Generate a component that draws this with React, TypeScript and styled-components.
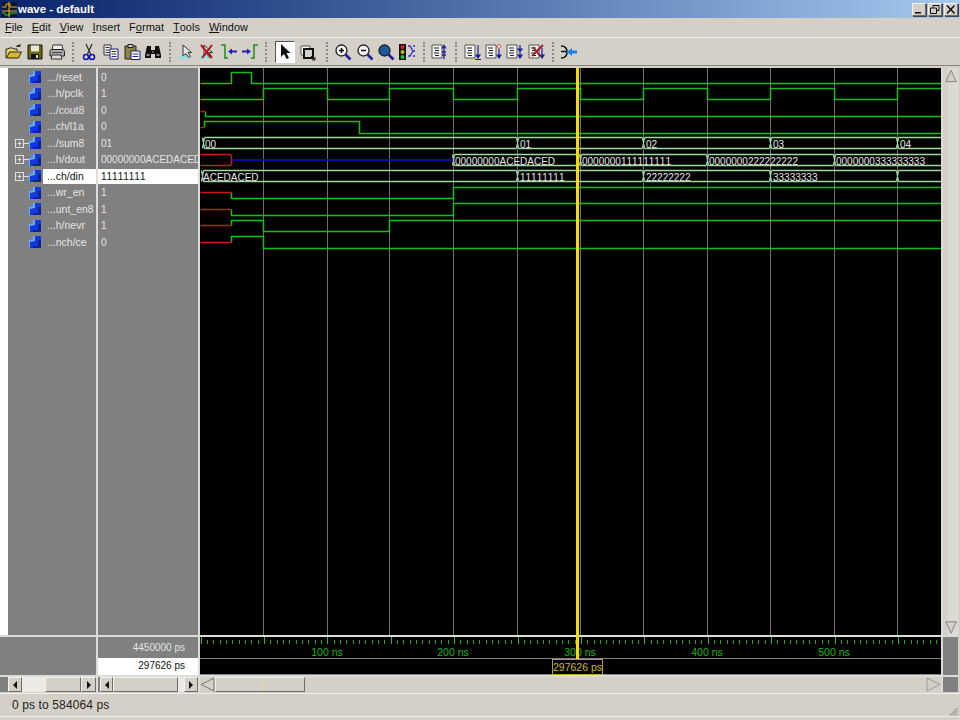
import React from "react";
import styled, { createGlobalStyle, css } from "styled-components";

const GlobalStyle = createGlobalStyle`
  html, body { margin: 0; padding: 0; background: #d4d0c8; overflow: hidden; }
  * { box-sizing: border-box; }
`;

const bevel = css`
  background: #d4d0c8;
  border-style: solid;
  border-width: 1px;
  border-color: #f4f2ee #6e6c68 #6e6c68 #f4f2ee;
  box-shadow: 1px 1px 0 #404040;
`;

const Page = styled.div`
  width: 960px;
  height: 720px;
  display: flex;
  flex-direction: column;
  background: #d4d0c8;
  font-family: "Liberation Sans", Arial, sans-serif;
  font-kerning: none;
  overflow: hidden;
`;

const TitleBar = styled.header`
  height: 18px;
  flex: none;
  display: flex;
  align-items: center;
  padding: 0 2px;
  background: linear-gradient(90deg, #0a246a 0%, #2f4f8f 30%, #a6caf0 100%);
`;
const TitleText = styled.span`
  margin-left: 1px;
  color: #fff;
  font-size: 11.5px;
  font-weight: 700;
`;
const WindowButtons = styled.div`
  margin-left: auto;
  display: flex;
  gap: 2px;
`;
const WindowButton = styled.div`
  ${bevel}
  width: 14px;
  height: 13px;
  display: flex;
  align-items: center;
  justify-content: center;
`;

const MenuBar = styled.nav`
  height: 19px;
  flex: none;
  display: flex;
  gap: 9px;
  align-items: center;
  padding: 0 0 2px 5px;
  font-size: 11px;
  color: #111;
`;
const MenuItem = styled.span`
  u { text-underline-offset: 1px; }
`;

const Toolbar = styled.div`
  height: 29px;
  flex: none;
  display: flex;
  align-items: center;
  padding-left: 3.35px;
  border-top: 1px solid #f2f0ec;
  border-bottom: 1px solid #858380;
`;
const ToolButton = styled.div<{ $w?: number; $pressed?: boolean }>`
  width: ${(p) => p.$w ?? 21.3}px;
  height: 22px;
  flex: none;
  display: flex;
  align-items: center;
  justify-content: center;
  ${(p) =>
    p.$pressed &&
    css`
      background: #fff;
      border-top: 1px solid #555;
      border-left: 1px solid #555;
      border-right: 1px solid #fff;
      border-bottom: 1px solid #fff;
      margin-left: 3px;
    `}
`;
const ToolSeparator = styled.div`
  width: 11.5px;
  height: 20px;
  flex: none;
  display: flex;
  justify-content: center;
  &::after {
    content: "";
    width: 0;
    height: 100%;
    border-left: 2px dotted #8a8a84;
  }
`;

const Workspace = styled.main`
  margin-top: 2px;
  display: grid;
  grid-template-columns: 96px 100px 741px 15px;
  grid-template-rows: 567px 38px 15px;
  gap: 2px;
  background: #dedcd8;
  width: 958px;
  height: 624px;
  box-shadow: 2px 0 0 #d4d0c8;
`;

const NamesPane = styled.section`
  background: #808080;
  border-left: 8px solid #fff;
  padding-top: 1px;
  display: grid;
  grid-auto-rows: 16.5px;
  align-content: start;
`;
const NameRow = styled.div`
  display: flex;
  align-items: center;
  padding-left: 7px;
`;
const ExpanderSlot = styled.div`
  width: 14px;
  height: 11px;
  flex: none;
  display: flex;
  align-items: center;
`;
const NameLabel = styled.span<{ $selected?: boolean }>`
  flex: 1;
  height: 15px;
  line-height: 15px;
  margin-left: 2px;
  padding-left: 4px;
  font-size: 10.5px;
  white-space: nowrap;
  overflow: hidden;
  color: ${(p) => (p.$selected ? "#111" : "#e4e4e4")};
  background: ${(p) => (p.$selected ? "#fff" : "transparent")};
`;

const ValuesPane = styled.section`
  background: #808080;
  padding-top: 1px;
  display: grid;
  grid-auto-rows: 16.5px;
  align-content: start;
`;
const ValueRow = styled.div<{ $selected?: boolean }>`
  height: 15px;
  align-self: center;
  line-height: 15px;
  padding-left: 3px;
  font-size: 10px;
  white-space: nowrap;
  overflow: hidden;
  color: ${(p) => (p.$selected ? "#111" : "#e4e4e4")};
  background: ${(p) => (p.$selected ? "#fff" : "transparent")};
`;

const WaveCanvas = styled.svg`
  grid-column: 3;
  grid-row: 1 / 3;
  display: block;
  background: #000;
  font-family: "Liberation Sans", Arial, sans-serif;
  font-kerning: none;
`;

const VScroll = styled.div`
  grid-column: 4;
  grid-row: 1;
  display: flex;
  flex-direction: column;
  justify-content: space-between;
  padding-left: 2px;
  background: linear-gradient(90deg, #d4d0c8 0, #d4d0c8 5px, #dcdad5 5px);
`;

const GreyBlock = styled.div`
  background: #808080;
`;
const CursorNames = styled(GreyBlock)`
  grid-column: 1;
  grid-row: 2;
`;
const CursorValues = styled.div`
  grid-column: 2;
  grid-row: 2;
  display: grid;
  grid-template-rows: 21px 17px;
  font-size: 10px;
  text-align: right;
`;
const CursorTotal = styled.div`
  background: #808080;
  color: #e4e4e4;
  line-height: 21px;
  padding-right: 13px;
`;
const CursorNow = styled.div`
  background: #fff;
  color: #111;
  line-height: 16px;
  padding-right: 13px;
`;
const ScrollCorner = styled(GreyBlock)`
  grid-column: 4;
`;

const HScroll = styled.div<{ $inset?: number }>`
  display: flex;
  height: 15px;
  background: #808080;
  padding-left: ${(p) => p.$inset ?? 0}px;
`;
const ScrollButton = styled.div<{ $w?: number }>`
  ${bevel}
  width: ${(p) => p.$w ?? 14}px;
  flex: none;
  display: flex;
  align-items: center;
  justify-content: center;
  box-shadow: none;
`;
const ScrollTrack = styled.div<{ $w: number }>`
  width: ${(p) => p.$w}px;
  flex: none;
  background: #eceae6;
`;
const ScrollThumb = styled.div`
  ${bevel}
  flex: 1;
  box-shadow: none;
`;
const WaveScroll = styled.div`
  display: flex;
  height: 15px;
  background: #d4d0c8;
`;
const OutlineArrow = styled.svg`
  width: 15px;
  height: 15px;
  flex: none;
`;
const WaveThumb = styled.div`
  ${bevel}
  position: relative;
  width: 90px;
  flex: none;
  margin-right: auto;
  box-shadow: none;
  &::after {
    content: "";
    position: absolute;
    left: 47px;
    top: 1px;
    bottom: 1px;
    width: 1px;
    background: #e0dc80;
  }
`;

const StatusBar = styled.footer`
  margin-top: 1px;
  height: 24px;
  flex: none;
  display: flex;
  align-items: center;
  justify-content: space-between;
  padding: 0 2px 0 12px;
  border-top: 1px solid #f0eeea;
  border-bottom: 1px solid #f0eeea;
  font-size: 12px;
  letter-spacing: 0.12px;
  color: #222;
`;

/* ---------- icons ---------- */
const Tri = ({ d }: { d: "l" | "r" }) => (
  <svg width="6" height="8" viewBox="0 0 6 8">
    <path d={d === "l" ? "M5 0v8L1 4z" : "M1 0v8l4-4z"} fill="#111" />
  </svg>
);

const Ic = ({ children, size = 18 }: { children: React.ReactNode; size?: number }) => (
  <svg width={size} height={size} viewBox="0 0 18 18">
    {children}
  </svg>
);

const OpenIcon = () => (
  <Ic>
    <path d="M1 15V6h2l1-1h4l1 1h3v2" fill="#e8d468" stroke="#222" />
    <path d="M1.5 15 4.5 9h12l-3 6z" fill="#d8b830" stroke="#222" />
    <path d="M11 4c1-2 3-2 4-1M15 1v2.5h-2.5" fill="none" stroke="#222" />
  </Ic>
);
const SaveIcon = () => (
  <Ic>
    <path d="M2 2h14v14H2z" fill="#6e6a10" stroke="#111" />
    <path d="M5 2.5h8v6H5z" fill="#e8e8d8" />
    <path d="M5 11h8v5H5z" fill="#111" />
    <path d="M10 12h2v3h-2z" fill="#ddd" />
  </Ic>
);
const PrintIcon = () => (
  <Ic>
    <path d="M5 2h9l1 5H4z" fill="#eee" stroke="#333" />
    <path d="M2 8c0-1 1-1.500 2-1.500h10c1.500 0 2.500 1 2.500 2V13H2z" fill="#aaa" stroke="#222" />
    <path d="M4 12h9l1 4H3z" fill="#ddd" stroke="#333" />
    <path d="M4 9.500h10" stroke="#444" />
  </Ic>
);
const CutIcon = () => (
  <Ic>
    <path d="M6 1l4.500 10M12 1 7.500 11" stroke="#333" strokeWidth="1.300" fill="none" />
    <circle cx="6" cy="14" r="2.500" fill="none" stroke="#1010c0" strokeWidth="1.500" />
    <circle cx="12" cy="14" r="2.500" fill="none" stroke="#1010c0" strokeWidth="1.500" />
  </Ic>
);
const CopyIcon = () => (
  <Ic>
    <path d="M2 2h7v10H2z" fill="#eee" stroke="#333" />
    <path d="M3.500 4.500h4M3.500 7h4M3.500 9.500h4" stroke="#333" />
    <path d="M8 6h8v10H8z" fill="#fff" stroke="#1a1a70" />
    <path d="M9.500 8.500h5M9.500 11h5M9.500 13.500h5" stroke="#2020a0" />
  </Ic>
);
const PasteIcon = () => (
  <Ic>
    <path d="M2 3h11v13H2z" fill="#8a8640" stroke="#222" />
    <path d="M5 1.500h5v3H5z" fill="#ccc" stroke="#222" />
    <path d="M8 8h9v8.500H8z" fill="#fff" stroke="#1a1a70" />
    <path d="M9.500 11h6M9.500 13.500h6" stroke="#2020a0" />
  </Ic>
);
const FindIcon = () => (
  <Ic>
    <path d="M3 3h4v4h4V3h4l2 9v3h-6v-4H7v4H1v-3z" fill="#111" />
    <path d="M2.500 11h3v2h-3zM12.500 11h3v2h-3z" fill="#888" />
    <path d="M8 8h2v2H8z" fill="#555" />
  </Ic>
);
const SelectIcon = () => (
  <>
    <path d="M1 15l4-3h8l-3 4H2z" fill="#90e0e0" />
    <path d="M6 2v11l3-2.500 2.500 4 2-1-2.500-4h3.500z" fill="#e8e8e8" stroke="#333" />
  </>
);
const AddCursorIcon = () => <Ic><SelectIcon /></Ic>;
const DelCursorIcon = () => (
  <Ic>
    <SelectIcon />
    <path d="M3 2l11 13M14 2 4 15" stroke="#b01818" strokeWidth="2" />
  </Ic>
);
const PrevEdgeIcon = () => (
  <Ic>
    <path d="M1 2h4v13h3M14 2" fill="none" stroke="#189018" strokeWidth="1.500" />
    <path d="M8 8.500l4-3v2h5v2h-5v2z" fill="#2020c0" />
  </Ic>
);
const NextEdgeIcon = () => (
  <Ic>
    <path d="M17 2h-4v13h-3" fill="none" stroke="#189018" strokeWidth="1.500" />
    <path d="M10 8.500l-4-3v2H1v2h5v2z" fill="#2020c0" />
  </Ic>
);
const PointerIcon = () => (
  <Ic>
    <path d="M5 1v13l3-3 2.500 5 2.500-1-2.500-5h4z" fill="#111" />
  </Ic>
);
const ZoomRangeIcon = () => (
  <Ic>
    <path d="M2 3h9v9H2z" fill="#fff" stroke="#555" />
    <path d="M5 6h9v9H5z" fill="#d4d0c8" stroke="#111" strokeWidth="2" />
    <path d="M12 13l4 4M16 14v3h-3" stroke="#111" fill="none" />
  </Ic>
);
const Mag = ({ sign }: { sign?: "+" | "-" | "fill" }) => (
  <Ic>
    <circle cx="7.500" cy="7.500" r="5.500" fill={sign === "fill" ? "#1a5a9a" : "#f4f4f4"} stroke="#222" strokeWidth="1.300" />
    <path d="M11.500 11.500l5 5" stroke="#2020a0" strokeWidth="2.600" />
    {sign !== "fill" && <path d="M5 7.500h5" stroke="#111" strokeWidth="1.500" />}
    {sign === "+" && <path d="M7.500 5v5" stroke="#111" strokeWidth="1.500" />}
  </Ic>
);
const TrafficIcon = () => (
  <Ic>
    <path d="M1 1h7v16H1z" fill="#111" />
    <circle cx="4.500" cy="4" r="2" fill="#e02020" />
    <circle cx="4.500" cy="9" r="2" fill="#c0b020" />
    <circle cx="4.500" cy="14" r="2" fill="#20c040" />
    <path d="M10 3h2l3 5h2M10 13h2l3-5M15 3h2M12 13h0M15 8l-3 5M15 13h2" stroke="#3030d0" strokeWidth="1.300" fill="none" />
  </Ic>
);
const DocLines = () => (
  <>
    <path d="M1 2h10v13H1z" fill="#f4f4f4" stroke="#555" />
    <path d="M3 5h5M4 7.500h4M3 10h5M4 12.500h4" stroke="#222" />
  </>
);
const ExpandAllIcon = () => (
  <Ic>
    <DocLines />
    <path d="M13 16V3M11 5.500l2-3 2 3M11 9h4M11 12h4" stroke="#2020a0" strokeWidth="1.300" fill="none" />
  </Ic>
);
const DownLineIcon = () => (
  <Ic>
    <DocLines />
    <path d="M14 2v12M12 12l2 3 2-3z" stroke="#2020a0" strokeWidth="1.200" fill="#2020a0" />
    <path d="M11 16.500h6" stroke="#2020a0" />
  </Ic>
);
const DownMarkIcon = () => (
  <Ic>
    <DocLines />
    <circle cx="14" cy="3.500" r="1.800" fill="#fff" stroke="#e04040" />
    <path d="M14 6v8M12 12l2 3 2-3z" stroke="#2020a0" strokeWidth="1.200" fill="#2020a0" />
  </Ic>
);
const DownDoubleIcon = () => (
  <Ic>
    <DocLines />
    <path d="M14 2v13M12 6l2 2.500L16 6zM12 12l2 3 2-3z" stroke="#2020a0" strokeWidth="1.200" fill="#2020a0" />
  </Ic>
);
const DownDelIcon = () => (
  <Ic>
    <DocLines />
    <path d="M14 5v9M12 12l2 3 2-3z" stroke="#2020a0" strokeWidth="1.200" fill="#2020a0" />
    <path d="M4 13 15 2M5 4l7 9" stroke="#a02030" strokeWidth="2" />
  </Ic>
);
const CombineIcon = () => (
  <Ic>
    <path d="M1 3c5 0 6 3 6 6s-1 6-6 6" fill="none" stroke="#111" strokeWidth="1.500" />
    <path d="M1 8.500h5" stroke="#111" strokeWidth="1.500" />
    <path d="M7 9l5-4v2.500h5v3h-5V13z" fill="#1880f0" />
  </Ic>
);
const AppIcon = () => (
  <svg width="15" height="15" viewBox="0 0 15 15">
    <rect width="15" height="15" fill="#14142c" />
    <path d="M0 5h4V2h4v3h7M0 9h15" stroke="#d0b040" fill="none" />
    <path d="M0 11h3v2h5v-2h7" stroke="#40c040" fill="none" />
    <path d="M7 0v15" stroke="#e8c020" />
  </svg>
);
const SignalIcon = () => (
  <svg width="12" height="12" viewBox="0 0 12 12" style={{ flex: "none" }}>
    <path d="M0 4 4 3V0h8v12H0z" fill="#1238e0" />
    <path d="M0 4 4 3V0h2v5L1 6v6H0z" fill="#6aa8ff" />
    <path d="M9 4h3v8H4v-2h5z" fill="#0c20a0" />
  </svg>
);
const Expander = () => (
  <svg width="14" height="11" viewBox="0 0 14 11">
    <rect x="0.500" y="1.500" width="8" height="8" fill="none" stroke="#e0e0e0" />
    <path d="M2.500 5.500h4M4.500 3.500v4" stroke="#e0e0e0" />
    <path d="M9 5.500h5" stroke="#e0e0e0" />
  </svg>
);
const Grip = () => (
  <svg width="9" height="9" viewBox="0 0 9 9" style={{ marginTop: 12 }}>
    <path d="M8.500 1 1 8.500M8.500 4 4 8.500M8.500 7 7 8.500" stroke="#777" />
  </svg>
);

/* ---------- data ---------- */
type Signal = { name: string; value: string; bus?: boolean; selected?: boolean };
const signals: Signal[] = [
  { name: ".../reset", value: "0" },
  { name: "...h/pclk", value: "1" },
  { name: ".../cout8", value: "0" },
  { name: "...ch/l1a", value: "0" },
  { name: ".../sum8", value: "01", bus: true },
  { name: "...h/dout", value: "00000000ACEDACED", bus: true },
  { name: "...ch/din", value: "11111111", bus: true, selected: true },
  { name: "...wr_en", value: "1" },
  { name: "...unt_en8", value: "1" },
  { name: "...h/nevr", value: "1" },
  { name: "...nch/ce", value: "0" },
];

const gridXs = [263, 327, 389, 453, 517, 580, 643, 707, 770, 834, 897];
const END = 941;
const GREEN = "#14c014";
const RED = "#c01c1c";
const BUS = "#a0d8a0";

const greenPaths = [
  `M200 83H231V72H251V83H${END}`,
  `M200 99H263V88H327V99H389V88H453V99H517V88H580V99H643V88H707V99H770V88H834V99H897V88H${END}`,
  `M205 111V116H${END}`,
  `M204 127V121H359V133H${END}`,
  `M231 192V198H453V187H${END}`,
  `M231 209V215H453V203H${END}`,
  `M231 225V220H263V231H389V220H${END}`,
  `M231 242V236H263V248H${END}`,
];
const redPaths = [
  "M200 111H205",
  "M200 127H204",
  "M200 154H230L231 156V163L230 165H200",
  "M200 192H231",
  "M200 209H231",
  "M200 225H231",
  "M200 242H231",
];

type Bus = { top: number; edges: number[]; texts: [number, string][] };
const buses: Bus[] = [
  {
    top: 137,
    edges: [203, 517, 643, 770, 897],
    texts: [[205, "00"], [520, "01"], [646, "02"], [773, "03"], [900, "04"]],
  },
  {
    top: 154,
    edges: [453, 580, 707, 834],
    texts: [
      [455, "00000000ACEDACED"],
      [582, "0000000111111111"],
      [709, "0000000222222222"],
      [836, "0000000333333333"],
    ],
  },
  {
    top: 170,
    edges: [202, 517, 643, 770, 897],
    texts: [[203, "ACEDACED"], [520, "11111111"], [646, "22222222"], [773, "33333333"]],
  },
];

const busPath = ({ top, edges }: Bus) => {
  const bot = top + 11;
  let d = "";
  edges.forEach((x, i) => {
    const next = edges[i + 1] ?? END + 2;
    d += `M${x - 1} ${top}L${x + 1} ${bot}M${x - 1} ${bot}L${x + 1} ${top}`;
    d += `M${x + 1} ${top}H${next - 1}M${x + 1} ${bot}H${next - 1}`;
  });
  return d;
};

const ticks = Array.from({ length: 118 }, (_, i) => ({
  x: Math.round(200.5 + i * 6.34),
  major: i % 10 === 0,
})).filter((t) => t.x < END);

const Wave = () => (
  <WaveCanvas width={741} height={607} viewBox="200 68 741 607">
    {gridXs.map((x) => (
      <line key={x} x1={x + 0.5} x2={x + 0.5} y1={68} y2={635} stroke="#707070" />
    ))}
    <g transform="translate(0.5 0.5)" fill="none">
      {greenPaths.map((d) => (
        <path key={d} d={d} stroke={GREEN} strokeWidth="1.500" />
      ))}
      {redPaths.map((d) => (
        <path key={d} d={d} stroke={RED} strokeWidth="1.500" />
      ))}
      {buses.map((b) => (
        <path key={b.top} d={busPath(b)} stroke={BUS} strokeWidth="1.300" />
      ))}
    </g>
    <line x1={232} x2={453} y1={160} y2={160} stroke="#0c0c90" strokeWidth="2" />
    {buses.map((b) =>
      b.texts.map(([x, t]) => (
        <text key={t} x={x} y={b.top + 10.5} fontSize="10" fill="#e6e6e6">
          {t}
        </text>
      ))
    )}
    <rect x={200} y={635} width={741} height={2} fill="#dedcd8" />
    {ticks.map((t) => (
      <line
        key={t.x}
        x1={t.x + 0.5}
        x2={t.x + 0.5}
        y1={t.major ? 637 : 640}
        y2={644}
        stroke={t.major ? "#1cc01c" : "#14a814"}
      />
    ))}
    {[[327, "100"], [453, "200"], [580, "300"], [707, "400"], [834, "500"]].map(([x, t]) => (
      <text key={t} x={x} y={656} fontSize="10.500" fill="#14b814" textAnchor="middle">
        {t} ns
      </text>
    ))}
    <line x1={200} x2={END} y1={658.5} y2={658.5} stroke="#808080" />
    <rect x={576} y={68} width={3} height={591} fill="#f4dc00" />
    <rect x={552.5} y={659.5} width={50} height={15} fill="#000" stroke="#b8a428" />
    <text x={577.5} y={671} fontSize="10.500" fill="#d0bc20" textAnchor="middle">
      297626 ps
    </text>
    <line x1={200} x2={552} y1={674.5} y2={674.5} stroke="#8a8a8a" />
    <line x1={603} x2={END} y1={674.5} y2={674.5} stroke="#8a8a8a" />
  </WaveCanvas>
);

const menu: [string, string, string][] = [
  ["", "F", "ile"],
  ["", "E", "dit"],
  ["", "V", "iew"],
  ["", "I", "nsert"],
  ["F", "o", "rmat"],
  ["", "T", "ools"],
  ["", "W", "indow"],
];

export default function App() {
  return (
    <Page>
      <GlobalStyle />
      <TitleBar>
        <AppIcon />
        <TitleText>wave - default</TitleText>
        <WindowButtons>
          <WindowButton>
            <svg width="10" height="9" viewBox="0 0 10 9"><path d="M1 7h6v1.500H1z" fill="#111" /></svg>
          </WindowButton>
          <WindowButton>
            <svg width="10" height="9" viewBox="0 0 10 9"><path d="M3 .5h6v5H7M3 .5v2M.5 3h6v5.500h-6z" fill="none" stroke="#111" /></svg>
          </WindowButton>
          <WindowButton>
            <svg width="10" height="9" viewBox="0 0 10 9"><path d="M1 .5l7.500 8M8.500 .5 1 8.500" stroke="#111" strokeWidth="1.500" /></svg>
          </WindowButton>
        </WindowButtons>
      </TitleBar>

      <MenuBar>
        {menu.map(([a, u, b]) => (
          <MenuItem key={a + u + b}>
            {a}
            <u>{u}</u>
            {b}
          </MenuItem>
        ))}
      </MenuBar>

      <Toolbar>
        <ToolButton><OpenIcon /></ToolButton>
        <ToolButton><SaveIcon /></ToolButton>
        <ToolButton><PrintIcon /></ToolButton>
        <ToolSeparator />
        <ToolButton><CutIcon /></ToolButton>
        <ToolButton><CopyIcon /></ToolButton>
        <ToolButton><PasteIcon /></ToolButton>
        <ToolButton><FindIcon /></ToolButton>
        <ToolSeparator />
        <ToolButton><AddCursorIcon /></ToolButton>
        <ToolButton><DelCursorIcon /></ToolButton>
        <ToolButton><PrevEdgeIcon /></ToolButton>
        <ToolButton><NextEdgeIcon /></ToolButton>
        <ToolSeparator />
        <ToolButton $pressed $w={20}><PointerIcon /></ToolButton>
        <ToolButton $w={26}><ZoomRangeIcon /></ToolButton>
        <ToolSeparator />
        <ToolButton><Mag sign="+" /></ToolButton>
        <ToolButton><Mag sign="-" /></ToolButton>
        <ToolButton><Mag sign="fill" /></ToolButton>
        <ToolButton><TrafficIcon /></ToolButton>
        <ToolSeparator />
        <ToolButton><ExpandAllIcon /></ToolButton>
        <ToolSeparator />
        <ToolButton><DownLineIcon /></ToolButton>
        <ToolButton><DownMarkIcon /></ToolButton>
        <ToolButton><DownDoubleIcon /></ToolButton>
        <ToolButton><DownDelIcon /></ToolButton>
        <ToolSeparator />
        <ToolButton><CombineIcon /></ToolButton>
      </Toolbar>

      <Workspace>
        <NamesPane>
          {signals.map((s) => (
            <NameRow key={s.name}>
              <ExpanderSlot>{s.bus && <Expander />}</ExpanderSlot>
              <SignalIcon />
              <NameLabel $selected={s.selected}>{s.name}</NameLabel>
            </NameRow>
          ))}
        </NamesPane>
        <ValuesPane>
          {signals.map((s) => (
            <ValueRow key={s.name} $selected={s.selected}>
              {s.value}
            </ValueRow>
          ))}
        </ValuesPane>
        <Wave />
        <VScroll>
          <OutlineArrow viewBox="0 0 15 15" style={{ width: 13, height: 16 }}>
            <path d="M1 14 7 1l6 13z" fill="#d4d0c8" stroke="#777" />
          </OutlineArrow>
          <OutlineArrow viewBox="0 0 15 15" style={{ width: 13, height: 15 }}>
            <path d="M1 1l6 13 6-13z" fill="#d4d0c8" stroke="#777" />
          </OutlineArrow>
        </VScroll>

        <CursorNames />
        <CursorValues>
          <CursorTotal>4450000 ps</CursorTotal>
          <CursorNow>297626 ps</CursorNow>
        </CursorValues>
        <ScrollCorner />

        <HScroll $inset={8}>
          <ScrollButton><Tri d="l" /></ScrollButton>
          <ScrollTrack $w={23} />
          <ScrollThumb />
          <ScrollButton $w={15}><Tri d="r" /></ScrollButton>
        </HScroll>
        <HScroll $inset={2}>
          <ScrollButton $w={13}><Tri d="l" /></ScrollButton>
          <ScrollThumb />
          <ScrollTrack $w={6} />
          <ScrollButton><Tri d="r" /></ScrollButton>
        </HScroll>
        <WaveScroll>
          <OutlineArrow viewBox="0 0 15 15">
            <path d="M14 1 1 7.500 14 14z" fill="#d4d0c8" stroke="#777" />
          </OutlineArrow>
          <WaveThumb />
          <OutlineArrow viewBox="0 0 15 15">
            <path d="M1 1l13 6.500L1 14z" fill="#d4d0c8" stroke="#999" />
          </OutlineArrow>
        </WaveScroll>
        <ScrollCorner />
      </Workspace>

      <StatusBar>
        <span>0 ps to 584064 ps</span>
        <Grip />
      </StatusBar>
    </Page>
  );
}
